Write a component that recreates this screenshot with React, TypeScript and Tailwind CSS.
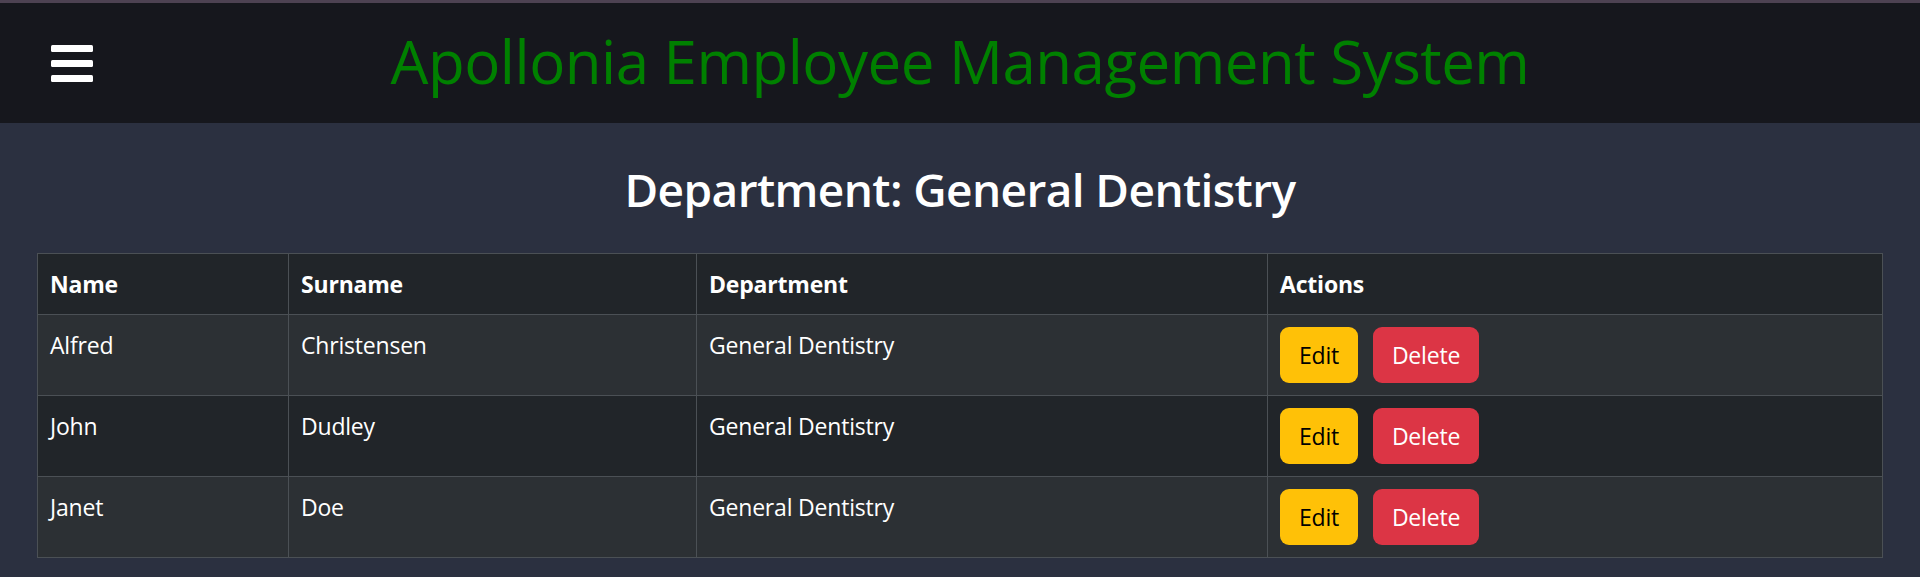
import { useState } from 'react';

interface Employee {
  name: string;
  surname: string;
  department: string;
}

const employees: Employee[] = [
  { name: 'Alfred', surname: 'Christensen', department: 'General Dentistry' },
  { name: 'John', surname: 'Dudley', department: 'General Dentistry' },
  { name: 'Janet', surname: 'Doe', department: 'General Dentistry' },
];

const font = { fontFamily: '"Open Sans", "Noto Sans", sans-serif' };

const MenuIcon = () => (
  <svg width="42" height="37" viewBox="0 0 42 37" fill="#ffffff">
    <rect x="0" y="0" width="42" height="7" rx="1.5" />
    <rect x="0" y="15" width="42" height="7" rx="1.5" />
    <rect x="0" y="30" width="42" height="7" rx="1.5" />
  </svg>
);

const App = () => {
  const [rows] = useState(employees);

  return (
    <div className="min-h-screen bg-[#2b3040] border-t-[3px] border-[#4d4252] text-white" style={font}>
      <header className="h-[120px] bg-[#16171d] grid grid-cols-[1fr_auto_1fr] items-center px-[51px]">
        <button className="w-[42px] h-[37px] flex items-center">
          <MenuIcon />
        </button>
        <h1 className="text-[60px] leading-none tracking-[-0.5px] text-[#008000] mb-[4px]">
          Apollonia Employee Management System
        </h1>
        <div />
      </header>

      <main className="px-[37px]">
        <h2 className="text-center text-[46px] font-semibold leading-[58px] tracking-[-0.6px] mt-[37px] mb-[35px]">
          Department: General Dentistry
        </h2>

        <table className="w-full table-fixed border-collapse border border-[#4b5055] text-[23px] leading-[36px] tracking-[-0.2px]">
          <colgroup>
            <col className="w-[251px]" />
            <col className="w-[408px]" />
            <col className="w-[571px]" />
            <col />
          </colgroup>
          <thead>
            <tr className="bg-[#212529]">
              {['Name', 'Surname', 'Department', 'Actions'].map((h) => (
                <th key={h} className="border border-[#4b5055] px-[12px] py-[12px] text-left align-top font-bold">
                  {h}
                </th>
              ))}
            </tr>
          </thead>
          <tbody>
            {rows.map((emp, i) => (
              <tr key={emp.name} className={i % 2 === 0 ? 'bg-[#2c3034]' : 'bg-[#212529]'}>
                <td className="border border-[#4b5055] px-[12px] py-[12px] align-top">{emp.name}</td>
                <td className="border border-[#4b5055] px-[12px] py-[12px] align-top">{emp.surname}</td>
                <td className="border border-[#4b5055] px-[12px] py-[12px] align-top">{emp.department}</td>
                <td className="border border-[#4b5055] px-[12px] py-[12px] align-top">
                  <div className="flex gap-[15px]">
                    <button className="w-[78px] h-[56px] rounded-[9px] bg-[#ffc107] text-black flex items-center justify-center">
                      Edit
                    </button>
                    <button className="w-[106px] h-[56px] rounded-[9px] bg-[#dc3545] text-white flex items-center justify-center">
                      Delete
                    </button>
                  </div>
                </td>
              </tr>
            ))}
          </tbody>
        </table>
      </main>
    </div>
  );
};

export default App;
